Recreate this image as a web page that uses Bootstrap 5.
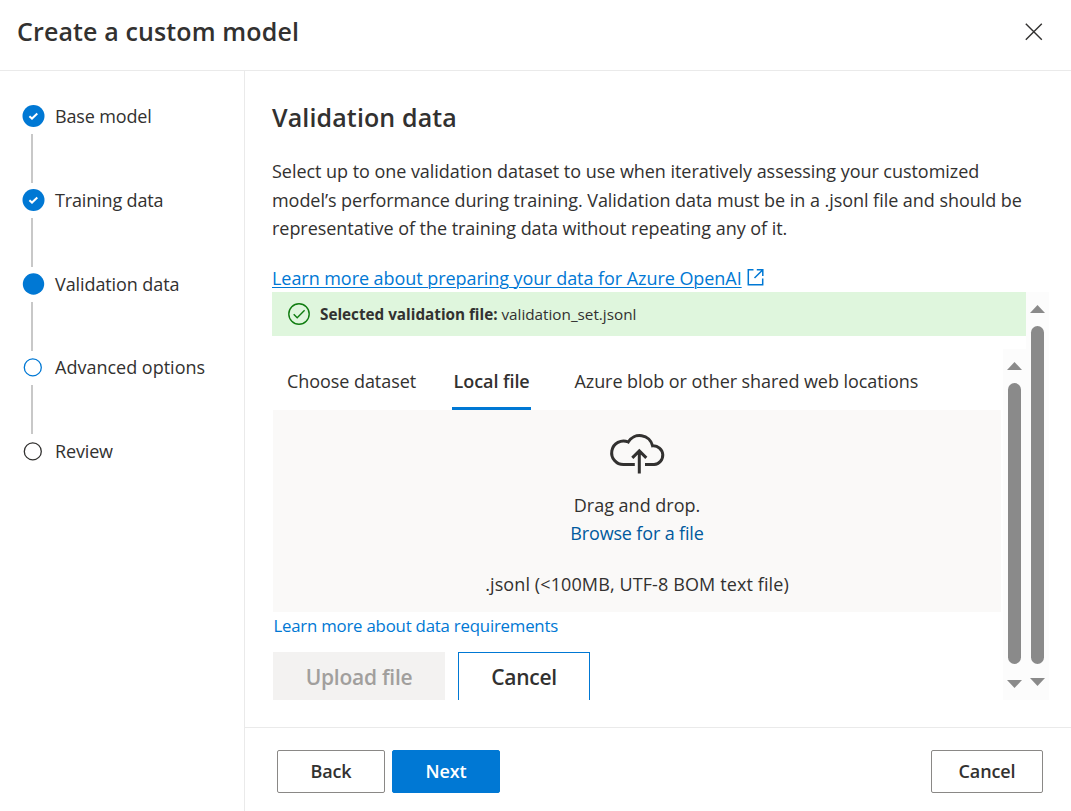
<!DOCTYPE html>
<html lang="en">
<head>
<meta charset="utf-8">
<meta name="viewport" content="width=device-width, initial-scale=1">
<title>Create a custom model</title>
<link href="https://cdn.jsdelivr.net/npm/bootstrap@5.3.0/dist/css/bootstrap.min.css" rel="stylesheet">
<script src="https://cdn.jsdelivr.net/npm/bootstrap@5.3.0/dist/js/bootstrap.bundle.min.js" defer></script>
<style>
  :root { --azure: #0078d4; --ink: #323130; --rule: #eaeaea; }
  body { font-family: "Open Sans", "Noto Sans", sans-serif; font-size: 18px; line-height: 28px; color: var(--ink); background: #fff; height: 811px; overflow: hidden; }
  svg { display: block; flex: none; }
  .topbar { height: 71px; border-bottom: 1px solid var(--rule); padding: 0 27px 8px 17px; }
  .title-text { font-size: 25px; font-weight: 600; line-height: 32px; margin: 0; letter-spacing: .13px; }
  .steps-pane { width: 245px; border-right: 1px solid var(--rule); padding: 31px 0 0 22px; }
  .wizard-step { height: 83.8px; }
  .step-rail { width: 23px; }
  .step-line { width: 2px; height: 49px; margin: 4px 0 0 9px; background: #c8c8c8; }
  .step-name { margin-left: 10px; letter-spacing: -.15px; }
  .step-name.current { letter-spacing: -.09px; }
  .step-name.upcoming { letter-spacing: 0; }
  .main-pane { padding: 30px 22px 0 27px; }
  .intro { line-height: 28.5px; margin: 24px 0 21px; white-space: nowrap; letter-spacing: -.044px; }
  .doc-row { gap: 5px; }
  .doc-link { color: var(--azure); text-decoration: underline; text-underline-offset: 2px; text-decoration-thickness: 1px; letter-spacing: -.055px; }
  .scroll-zone { height: 408px; }
  .file-alert { height: 44px; background: #dff6dd; padding-left: 16px; font-size: 15.3px; gap: 10px; letter-spacing: -.02px; }
  .inner-zone { height: 351px; margin-top: 13px; }
  .track { width: 23px; background: #fcfcfc; padding-top: 13px; }
  .thumb { width: 13px; background: #8a8a8a; border-radius: 7px; margin-top: 13px; }
  .thumb-inner { height: 281px; margin-bottom: 16px; }
  .thumb-outer { height: 338px; margin-bottom: 14px; }
  .tab-row { height: 61px; margin-left: 14px; letter-spacing: -.06px; }
  .tab-link { height: 61px; padding: 18px 1px 0; border-bottom: 3px solid transparent; white-space: nowrap; }
  .tab-link.active { font-weight: 600; border-color: var(--azure); padding: 18px 1.4px 0; margin: 0 42.4px 0 35px; }
  .drop-area { height: 202px; width: 728px; margin-left: 1px; background: #faf9f8; padding-top: 22px; }
  .drop-hint { margin-top: 17px; }
  .browse-link { color: #005a9e; letter-spacing: -.15px; }
  .file-limit { margin-top: 23px; letter-spacing: .11px; }
  .req-link { margin-left: 1.4px; color: var(--azure); font-size: 16.8px; letter-spacing: -.2px; }
  .upload-row { margin: 12px 0 0 1px; gap: 13px; }
  .btn-flat, .btn-flat:disabled { border-radius: 0; height: 51px; font-size: 21px; font-weight: 600; padding: 0; line-height: 28px; letter-spacing: -.25px; opacity: 1; }
  .btn-upload, .btn-upload:disabled { width: 172px; border: 0; background: #f3f2f1; color: #a19f9d; }
  .btn-clear { width: 132px; border: 1px solid var(--azure); color: var(--ink); }
  .btn-foot { width: 108px; height: 43px; border-radius: 2px; font-weight: 600; padding: 0 0 2px; font-size: 18px; line-height: 26px; border: 1px solid #8a8886; color: var(--ink); background: #fff; letter-spacing: -.1px; }
  .btn-next { background: var(--azure); border-color: var(--azure); color: #fff; margin-left: 7px; }
  .btn-quit { width: 112px; }
  .foot { height: 84px; border-top: 1px solid var(--rule); padding: 22px 28px 0 32px; }
</style>
</head>
<body class="d-flex flex-column">
<header class="topbar d-flex align-items-center justify-content-between">
  <h1 class="title-text">Create a custom model</h1>
  <svg width="20" height="20" viewBox="0 0 20 20" fill="none" stroke="#323130" stroke-width="1.4"><path d="M1.8 2.8 17.8 18.8M17.8 2.8 1.8 18.8"/></svg>
</header>
<div class="d-flex flex-grow-1">
  <nav class="steps-pane flex-shrink-0">
    <div class="wizard-step d-flex">
      <div class="step-rail"><svg width="23" height="28" viewBox="0 0 23 28"><circle cx="11.5" cy="14" r="11" fill="#0078d4"/><path d="M7.4 14.2 10 16.6 15.3 11.6" fill="none" stroke="#fff" stroke-width="2"/></svg><div class="step-line"></div></div>
      <span class="step-name">Base model</span>
    </div>
    <div class="wizard-step d-flex">
      <div class="step-rail"><svg width="23" height="28" viewBox="0 0 23 28"><circle cx="11.5" cy="14" r="11" fill="#0078d4"/><path d="M7.4 14.2 10 16.6 15.3 11.6" fill="none" stroke="#fff" stroke-width="2"/></svg><div class="step-line"></div></div>
      <span class="step-name">Training data</span>
    </div>
    <div class="wizard-step d-flex">
      <div class="step-rail"><svg width="23" height="28" viewBox="0 0 23 28"><circle cx="11.5" cy="14" r="10.7" fill="#0078d4"/></svg><div class="step-line"></div></div>
      <span class="step-name current">Validation data</span>
    </div>
    <div class="wizard-step d-flex">
      <div class="step-rail"><svg width="23" height="28" viewBox="0 0 23 28"><circle cx="10.8" cy="14.4" r="8.5" fill="none" stroke="#0078d4" stroke-width="1.3"/></svg><div class="step-line"></div></div>
      <span class="step-name upcoming">Advanced options</span>
    </div>
    <div class="wizard-step d-flex">
      <div class="step-rail"><svg width="23" height="28" viewBox="0 0 23 28"><circle cx="10.8" cy="14.4" r="8.5" fill="none" stroke="#323130" stroke-width="1.3"/></svg></div>
      <span class="step-name">Review</span>
    </div>
  </nav>
  <div class="d-flex flex-column flex-grow-1">
    <main class="main-pane flex-grow-1">
      <h2 class="title-text">Validation data</h2>
      <p class="intro">Select up to one validation dataset to use when iteratively assessing your customized<br>model’s performance during training. Validation data must be in a .jsonl file and should be<br>representative of the training data without repeating any of it.</p>
      <div class="doc-row d-flex">
        <a class="doc-link" href="#">Learn more about preparing your data for Azure OpenAI</a>
        <svg width="17" height="28" viewBox="0 0 17 28" fill="none" stroke="#0078d4" stroke-width="1.5"><path d="M6.5 5.8H1.3V20.7H15.7V14.5M9.8 5.8H15.8V12M15.6 6 7.5 14"/></svg>
      </div>
      <div class="scroll-zone d-flex">
        <div class="flex-grow-1">
          <div class="file-alert d-flex align-items-center">
            <svg width="22" height="22" viewBox="0 0 22 22" fill="none" stroke="#107c10" stroke-width="1.4"><circle cx="11" cy="11" r="10.2"/><path d="M5.7 11.2 9.2 14.7 16.6 7.3"/></svg>
            <span><b>Selected validation file:</b> validation_set.jsonl</span>
          </div>
          <div class="inner-zone d-flex overflow-hidden">
            <div class="flex-grow-1">
              <div class="tab-row d-flex">
                <span class="tab-link">Choose dataset</span>
                <span class="tab-link active">Local file</span>
                <span class="tab-link">Azure blob or other shared web locations</span>
              </div>
              <div class="drop-area d-flex flex-column align-items-center">
                <svg width="56" height="42" viewBox="-.8 .6 56 42" fill="none" stroke="#323130" stroke-width="3"><path d="M25 33.2H14.2A11.8 11.8 0 1 1 18.4 10.6A13.3 13.3 0 0 1 42.8 14.4A9.4 9.4 0 1 1 44.3 33.2H35.2M29.5 42V20M22.5 26.5 29.5 19.5 36.5 26.5"/></svg>
                <span class="drop-hint">Drag and drop.</span>
                <span class="browse-link">Browse for a file</span>
                <span class="file-limit">.jsonl (&lt;100MB, UTF-8 BOM text file)</span>
              </div>
              <div class="req-link">Learn more about data requirements</div>
              <div class="upload-row d-flex">
                <button class="btn btn-flat btn-upload" disabled>Upload file</button>
                <button class="btn btn-flat btn-clear">Cancel</button>
              </div>
            </div>
            <div class="track d-flex flex-column align-items-center">
              <svg width="15" height="8" viewBox="0 0 15 8"><path d="M0 8 7.5 0 15 8Z" fill="#8a8a8a"/></svg>
              <div class="thumb thumb-inner"></div>
              <svg width="15" height="8" viewBox="0 0 15 8"><path d="M0 0 7.5 8 15 0Z" fill="#8a8a8a"/></svg>
            </div>
          </div>
        </div>
        <div class="track d-flex flex-column align-items-center">
          <svg width="15" height="8" viewBox="0 0 15 8"><path d="M0 8 7.5 0 15 8Z" fill="#8a8a8a"/></svg>
          <div class="thumb thumb-outer"></div>
          <svg width="15" height="8" viewBox="0 0 15 8"><path d="M0 0 7.5 8 15 0Z" fill="#8a8a8a"/></svg>
        </div>
      </div>
    </main>
    <footer class="foot d-flex align-items-start">
      <button class="btn btn-foot">Back</button>
      <button class="btn btn-foot btn-next">Next</button>
      <button class="btn btn-foot btn-quit ms-auto">Cancel</button>
    </footer>
  </div>
</div>
</body>
</html>
